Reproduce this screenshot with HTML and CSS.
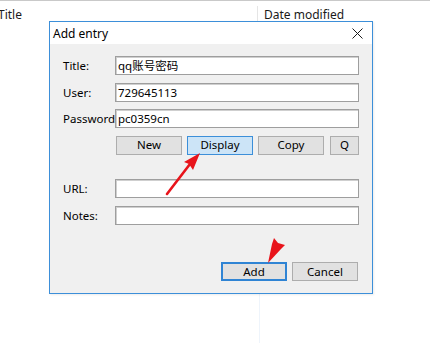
FILE: index.html
```html
<!DOCTYPE html>
<html>
<head>
<meta charset="utf-8">
<link rel="stylesheet" href="styles.css">
</head>
<body>
<div class="page">
  <div class="list-header">
    <div class="col col-title">Title</div>
    <div class="col col-date">Date modified</div>
  </div>
  <div class="list-body">
    <div class="col-space"></div>
    <div class="col-sep"></div>
  </div>

  <div class="dialog">
    <div class="titlebar">
      <span class="caption">Add entry</span>
      <svg class="close" width="11" height="11" viewBox="0 0 11 11"><path d="M0.5 0.5 L10.5 10.5 M10.5 0.5 L0.5 10.5" stroke="#1a1a1a" stroke-width="1" fill="none"/></svg>
    </div>
    <div class="body">
      <div class="row">
        <label class="lbl">Title:</label>
        <div class="field">qq账号密码</div>
      </div>
      <div class="row">
        <label class="lbl">User:</label>
        <div class="field">729645113</div>
      </div>
      <div class="row">
        <label class="lbl">Password</label>
        <div class="field">pc0359cn</div>
      </div>
      <div class="row">
        <span class="lbl"></span>
        <div class="btnrow">
          <button class="btn">New</button>
          <button class="btn btn-hot">Display</button>
          <button class="btn">Copy</button>
          <button class="btn btn-q">Q</button>
        </div>
      </div>
      <div class="row row-url">
        <label class="lbl">URL:</label>
        <div class="field"></div>
      </div>
      <div class="row">
        <label class="lbl">Notes:</label>
        <div class="field"></div>
      </div>
      <div class="actions">
        <button class="btn btn-default">Add</button>
        <button class="btn">Cancel</button>
      </div>
    </div>
  </div>

  <svg class="arrows" width="430" height="343" viewBox="0 0 430 343">
    <line x1="167" y1="193" x2="190" y2="163" stroke="#e8141b" stroke-width="2.6" stroke-linecap="round"/>
    <polygon points="200,152 184,161 189,163 193,169" fill="#e8141b"/>
    <polygon points="268,262 272,243 274,237 278,242 285,244 281,248" fill="#e8141b"/>
  </svg>
</div>
</body>
</html>
```

FILE: styles.css
```css
* { box-sizing: border-box; }
html, body { margin: 0; padding: 0; background: #ffffff; }
body {
  font-family: "Noto Sans", "Noto Sans CJK SC", sans-serif;
  font-size: 11.5px;
  color: #000;
}
.page {
  position: relative;
  width: 430px;
  height: 343px;
  overflow: hidden;
  border-top: 1px solid #c9c9c9;
  display: flex;
  flex-direction: column;
}
.list-header {
  display: flex;
  height: 25px;
}
.col {
  font-size: 12px;
  line-height: 16px;
  padding-top: 6px;
  color: #1a1a1a;
}
.col-title {
  width: 260px;
  margin-left: -2px;
  padding-left: 0;
  border-right: 1px solid #e5e5e5;
  margin-top: 5px;
  padding-top: 1px;
}
.col-date {
  padding-left: 6px;
}
.list-body {
  flex: 1;
  display: flex;
}
.col-space { width: 259px; }
.col-sep { width: 1px; background: #eef4fb; }

.dialog {
  position: absolute;
  left: 49px;
  top: 20px;
  width: 324px;
  height: 273px;
  border: 1px solid #3c8fd9;
  background: #f0f0f0;
  display: flex;
  flex-direction: column;
  box-shadow: 1px 1px 2px rgba(0,0,0,0.08);
}
.titlebar {
  height: 22px;
  background: #ffffff;
  display: flex;
  align-items: center;
  justify-content: space-between;
  padding: 0 9px 0 3px;
}
.caption {
  font-size: 12px;
  color: #000;
  padding-top: 1px;
}
.close { display: block; }
.body {
  flex: 1;
  padding: 12px 13px 0 13px;
  display: flex;
  flex-direction: column;
}
.row {
  display: flex;
  align-items: center;
  height: 19px;
  margin-bottom: 7.5px;
}
.row-url { margin-top: 17px; }
.lbl {
  width: 52px;
  flex: none;
  color: #000;
  white-space: nowrap;
}
.field {
  width: 244px;
  height: 19px;
  background: #fff;
  border: 1px solid #9e9e9e;
  box-shadow: inset 1px 1px 0 #cfcfcf;
  padding: 0 2px;
  line-height: 17px;
  white-space: nowrap;
}
.btnrow {
  display: flex;
  gap: 5px;
  margin-left: 1px;
}
.btn {
  font-family: inherit;
  font-size: 11.5px;
  width: 66px;
  height: 19px;
  padding: 0;
  margin: 0;
  background: #e1e1e1;
  border: 1px solid #adadad;
  color: #000;
  line-height: 16px;
}
.btn-q { width: 29px; margin-left: 1px; }
.btn-hot {
  background: #cce4f7;
  border-color: #3c8fd9;
}
.btn-default {
  border: 2px solid #2f84d4;
}
.actions {
  display: flex;
  justify-content: flex-end;
  gap: 5px;
  margin-top: 30px;
  padding-right: 1px;
}
.arrows {
  position: absolute;
  left: 0;
  top: 0;
  pointer-events: none;
}
```
